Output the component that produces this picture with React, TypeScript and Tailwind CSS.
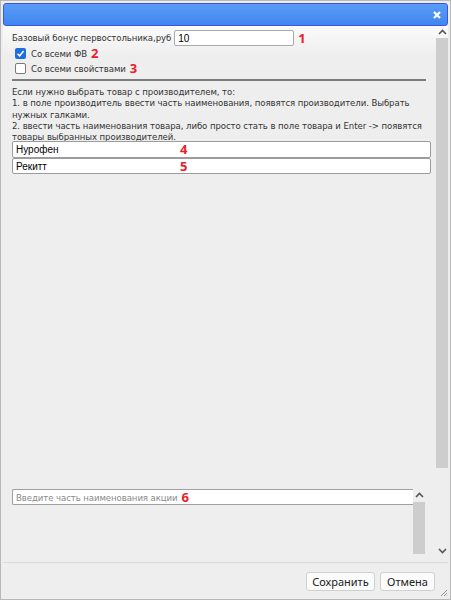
import React from "react";

const lbl = { fontFamily: '"DejaVu Sans Condensed", "DejaVu Sans", sans-serif' };

function Num({ n }: { n: string }) {
  return (
    <span className="ml-[4px] text-[13px] font-bold leading-none text-[#e8202a] [font-family:'Open_Sans',sans-serif]">
      {n}
    </span>
  );
}

function Up() {
  return (
    <svg width="9" height="6" viewBox="0 0 9 6">
      <path d="M1 5 L4.5 1.5 L8 5" stroke="#555" strokeWidth="1.6" fill="none" />
    </svg>
  );
}
function Down() {
  return (
    <svg width="9" height="6" viewBox="0 0 9 6">
      <path d="M1 1 L4.5 4.5 L8 1" stroke="#555" strokeWidth="1.6" fill="none" />
    </svg>
  );
}

export default function App() {
  return (
    <div className="relative h-[600px] w-[451px] overflow-hidden border border-[#b8b8b8] bg-[#eeeeee] px-[2px]">
      {/* title bar */}
      <div className="mt-[2px] flex h-[23px] items-center justify-end rounded-[3px] border border-[#3b55e3] bg-gradient-to-b from-[#5a9cf6] to-[#3f86ef] pr-[4px]">
        <svg width="8" height="8" viewBox="0 0 8 8" className="mr-[2px]">
          <path d="M1 1 L7 7 M7 1 L1 7" stroke="#fff" strokeWidth="2.2" />
        </svg>
      </div>

      {/* body */}
      <div className="flex h-[536px] bg-gradient-to-b from-[#fbfbfb] to-[#eeeeee] to-[30px]">
        <div className="flex min-w-0 flex-1 flex-col pl-[9px] pr-[5px] text-[9.5px] tracking-[-0.07px] text-[#333]" style={lbl}>
          <div className="mt-[4px] flex h-[16px] items-center">
            <span className="leading-none">Базовый бонус первостольника,руб</span>
            <div className="ml-[3px] flex h-[16px] w-[120px] items-center rounded-[2px] border border-[#a9a9a9] bg-white pl-[3px] text-[10px] tracking-normal text-black [font-family:'Liberation_Sans',sans-serif]">
              10
            </div>
            <Num n="1" />
          </div>
          <div className="flex h-[15px] items-center pl-[3px]">
            <div className="flex h-[11px] w-[11px] items-center justify-center rounded-[2px] bg-[#1d6fe0]">
              <svg width="9" height="9" viewBox="0 0 9 9">
                <path d="M1.5 4.8 L3.6 6.8 L7.6 2" stroke="#fff" strokeWidth="1.5" fill="none" />
              </svg>
            </div>
            <span className="ml-[5px] leading-none">Со всеми ФВ</span>
            <Num n="2" />
          </div>
          <div className="flex h-[15px] items-center pl-[3px]">
            <div className="h-[11px] w-[11px] rounded-[2px] border border-[#7a7a7a] bg-white" />
            <span className="ml-[5px] leading-none">Со всеми свойствами</span>
            <Num n="3" />
          </div>
          <div className="mr-[5px] mt-[3px] h-[2px] bg-[#7c7c7c]" />
          <div className="mt-[5px] whitespace-nowrap text-[9.5px] leading-[11.25px]">
            Если нужно выбрать товар с производителем, то:
            <br />
            1. в поле производитель ввести часть наименования, появятся производители. Выбрать
            <br />
            нужных галками.
            <br />
            2. ввести часть наименования товара, либо просто стать в поле товара и Enter -&gt; появятся
            <br />
            товары выбранных производителей.
          </div>
          <div className="-mt-[1px] flex h-[17px] items-center rounded-[2px] border border-[#9c9c9c] bg-white pl-[3px] text-[10px] tracking-normal text-black [font-family:'Liberation_Sans',sans-serif]">
            <span className="w-[160px]">Нурофен</span>
            <Num n="4" />
          </div>
          <div className="flex h-[16px] items-center rounded-[2px] border border-[#9c9c9c] bg-white pl-[3px] text-[10px] tracking-normal text-black [font-family:'Liberation_Sans',sans-serif]">
            <span className="w-[160px]">Рекитт</span>
            <Num n="5" />
          </div>

          <div className="mt-[315px] flex pr-[6px]">
            <div className="flex h-[16px] flex-1 items-center rounded-l-[2px] border border-r-0 border-[#a0a0a0] bg-white pl-[3px] text-[#8a8a8a]">
              <span className="leading-none">Введите часть наименования акции</span>
              <Num n="6" />
            </div>
            <div className="flex h-[65px] w-[12px] shrink-0 flex-col">
              <div className="flex h-[12px] items-center justify-center">
                <Up />
              </div>
              <div className="mt-[1px] flex-1 bg-[#cdcdcd]" />
            </div>
          </div>
        </div>

        {/* main scrollbar */}
        <div className="flex h-[531px] w-[12px] shrink-0 flex-col">
          <div className="flex h-[12px] items-center justify-center">
            <Up />
          </div>
          <div className="h-[430px] bg-[#cdcdcd]" />
          <div className="flex-1" />
          <div className="flex h-[12px] items-center justify-center">
            <Down />
          </div>
        </div>
      </div>

      {/* footer */}
      <div className="flex h-[37px] items-center justify-end gap-[5px] border-t border-[#dadada] pr-[13px] text-[11px] text-[#222] [font-family:'Noto_Sans',sans-serif]">
        <button className="h-[19px] w-[69px] rounded-[3px] border border-[#d0d0d0] bg-[#fbfbfb] leading-none">
          Сохранить
        </button>
        <button className="h-[19px] w-[55px] rounded-[3px] border border-[#d0d0d0] bg-[#fbfbfb] leading-none">
          Отмена
        </button>
      </div>
      <svg width="8" height="8" viewBox="0 0 8 8" className="absolute bottom-[2px] right-[2px]">
        <path d="M7 1 L1 7 M7 4 L4 7 M7 6.5 L6.5 7" stroke="#888" strokeWidth="0.9" />
      </svg>
    </div>
  );
}
